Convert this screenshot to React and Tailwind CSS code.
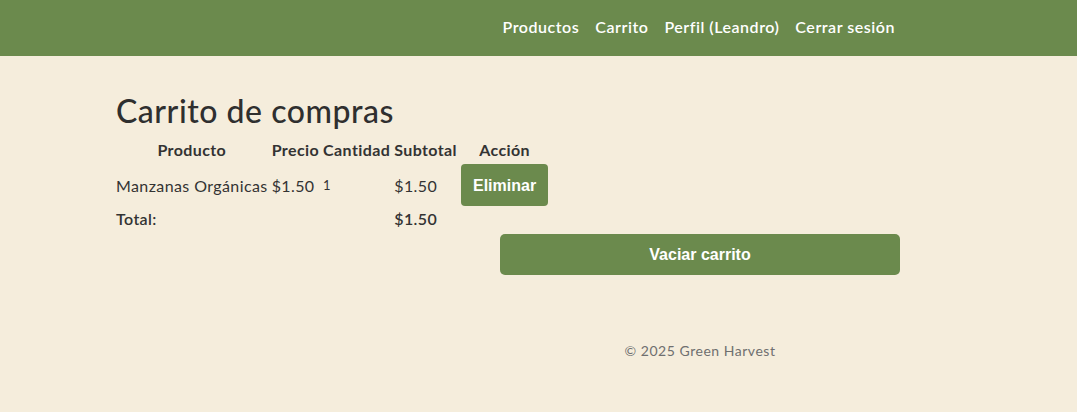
export default function App() {
  const font = { fontFamily: "Lato, 'Noto Sans', sans-serif", letterSpacing: "0.033em" };
  const arial = { fontFamily: "'Liberation Sans', Arial, sans-serif", letterSpacing: "0" };
  return (
    <div className="min-h-[412px] bg-[#f5eddc] text-[#333333]" style={font}>
      <header className="h-[56px] bg-[#6b8a4d] flex items-center justify-end pr-[182px] pb-[2px]">
        <nav className="flex gap-4 text-[16px] font-semibold text-white">
          <a>Productos</a>
          <a>Carrito</a>
          <a>Perfil (Leandro)</a>
          <a>Cerrar sesión</a>
        </nav>
      </header>
      <main className="ml-[116px] w-[784px] pt-[35px]">
        <h1 className="text-[32px] font-medium leading-[40px] text-[#2f2f2f]">Carrito de compras</h1>
        <table className="-ml-[3px] mt-[4px] border-separate border-spacing-[2px] text-[16px] leading-[19px]" style={{ letterSpacing: "0.025em" }}>
          <thead>
            <tr className="font-semibold">
              <th className="px-px h-[24px] p-0">Producto</th>
              <th className="px-px p-0">Precio</th>
              <th className="px-px p-0">Cantidad</th>
              <th className="px-px p-0">Subtotal</th>
              <th className="px-px p-0">Acción</th>
            </tr>
          </thead>
          <tbody>
            <tr>
              <td className="px-px">Manzanas Orgánicas</td>
              <td className="px-px">$1.50</td>
              <td className="px-px text-[13px]">1</td>
              <td className="px-px">$1.50</td>
              <td className="px-px py-px">
                <button className="h-[42px] px-[12px] rounded-[4px] bg-[#6b8a4d] text-white font-bold text-[16px] block" style={arial}>Eliminar</button>
              </td>
            </tr>
            <tr className="font-semibold">
              <td className="px-px h-[19px] p-0">Total:</td>
              <td></td>
              <td></td>
              <td className="px-px p-0">$1.50</td>
              <td></td>
            </tr>
          </tbody>
        </table>
        <div className="flex justify-end mt-[4px]">
          <button className="w-[400px] h-[41px] rounded-[5px] bg-[#6b8a4d] text-white font-bold text-[16px]" style={arial}>Vaciar carrito</button>
        </div>
        <div className="flex justify-end mt-[65px]">
          <p className="w-[400px] text-center text-[14px] text-[#6f6f6f]">© 2025 Green Harvest</p>
        </div>
      </main>
    </div>
  );
}
